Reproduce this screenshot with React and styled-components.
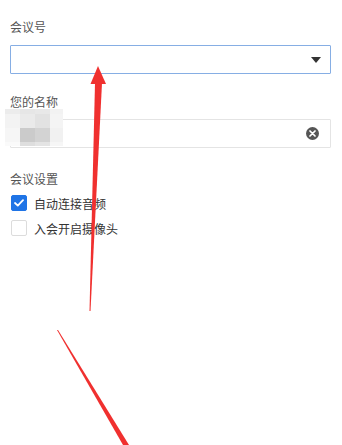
import React from "react"
import styled, { createGlobalStyle } from "styled-components"

const GlobalStyle = createGlobalStyle`
  html, body {
    margin: 0;
    padding: 0;
    background: #fff;
  }
  body {
    font-family: "Noto Sans CJK SC", "Noto Sans", sans-serif;
  }
`

const Page = styled.div`
  position: relative;
  width: 342px;
  height: 445px;
  overflow: hidden;
  box-sizing: border-box;
  padding: 18px 11px 0 10px;
  background: #fff;
`

const Field = styled.div`
  display: flex;
  flex-direction: column;
  margin-bottom: ${p => p.$gap || 0}px;
`

const Label = styled.div`
  font-size: 12px;
  line-height: 18px;
  color: #555;
  margin-bottom: ${p => p.$gap || 8}px;
`

const Box = styled.div`
  display: flex;
  align-items: center;
  justify-content: flex-end;
  height: 29px;
  box-sizing: border-box;
  padding: 0 10px;
  border: 1px solid ${p => (p.$focus ? "#86aee4" : "#e4e4e4")};
  border-radius: 1px;
  background: #fff;
`

const Caret = styled.span`
  width: 0;
  height: 0;
  border-left: 5.5px solid transparent;
  border-right: 5.5px solid transparent;
  border-top: 6px solid #333;
  margin-right: -1px;
`

const Clear = styled.span`
  display: flex;
  align-items: center;
  justify-content: center;
  width: 13px;
  height: 13px;
  border-radius: 50%;
  background: #555;
  margin-right: 1px;
`

const Options = styled.div`
  display: flex;
  flex-direction: column;
  gap: 9px;
  padding-left: 1px;
`

const Option = styled.label`
  display: flex;
  align-items: center;
  gap: 7px;
  height: 16px;
  font-size: 12px;
  color: #333;
`

const Check = styled.span`
  display: flex;
  align-items: center;
  justify-content: center;
  width: 16px;
  height: 16px;
  box-sizing: border-box;
  border-radius: 2px;
  background: ${p => (p.$on ? "#1f74e6" : "#fff")};
  border: 1px solid ${p => (p.$on ? "#1f74e6" : "#dcdcdc")};
`

const Mosaic = styled.div`
  position: absolute;
  left: 5px;
  top: 109px;
  width: 58px;
  height: 37px;
  display: grid;
  grid-template-columns: 15px 15px 15px 13px;
  grid-template-rows: 5px 14px 14px 4px;
`

const Cell = styled.span`
  background: ${p => p.$c};
`

const Overlay = styled.svg`
  position: absolute;
  left: 0;
  top: 0;
  pointer-events: none;
`

const mosaicColors = [
  "#ececec", "#e6e6e6", "#e8e8e8", "#f2f2f2",
  "#f3f3f3", "#eaeaea", "#e2e2e2", "#f4f4f4",
  "#f6f6f6", "#cbcbcb", "#d3d3d3", "#f1f1f1",
  "#fafafa", "#dedede", "#e4e4e4", "#f6f6f6",
]

const App = () => {
  return (
    <>
      <GlobalStyle />
      <Page>
        <Field $gap={19}>
          <Label $gap={9}>会议号</Label>
          <Box $focus>
            <Caret />
          </Box>
        </Field>

        <Field $gap={22}>
          <Label>您的名称</Label>
          <Box>
            <Clear>
              <svg width="7" height="7" viewBox="0 0 7 7">
                <path d="M1 1 L6 6 M6 1 L1 6" stroke="#fff" strokeWidth="1.7" strokeLinecap="round" />
              </svg>
            </Clear>
          </Box>
        </Field>

        <Label $gap={7}>会议设置</Label>
        <Options>
          <Option>
            <Check $on>
              <svg width="10" height="8" viewBox="0 0 10 8">
                <path d="M1 4 L3.8 6.6 L9 1.2" fill="none" stroke="#fff" strokeWidth="1.8" strokeLinecap="round" strokeLinejoin="round" />
              </svg>
            </Check>
            自动连接音频
          </Option>
          <Option>
            <Check />
            入会开启摄像头
          </Option>
        </Options>

        <Mosaic>
          {mosaicColors.map((c, i) => (
            <Cell key={i} $c={c} />
          ))}
        </Mosaic>

        <Overlay width="342" height="445" viewBox="0 0 342 445">
          <polygon points="98,66 90.5,84 106,84" fill="#f0302f" />
          <polygon points="95,83 102,83 90.5,311 89.5,311" fill="#f0302f" />
          <polygon points="57,330 58,330 129,445 123,445" fill="#f0302f" />
        </Overlay>
      </Page>
    </>
  )
}

export default App
